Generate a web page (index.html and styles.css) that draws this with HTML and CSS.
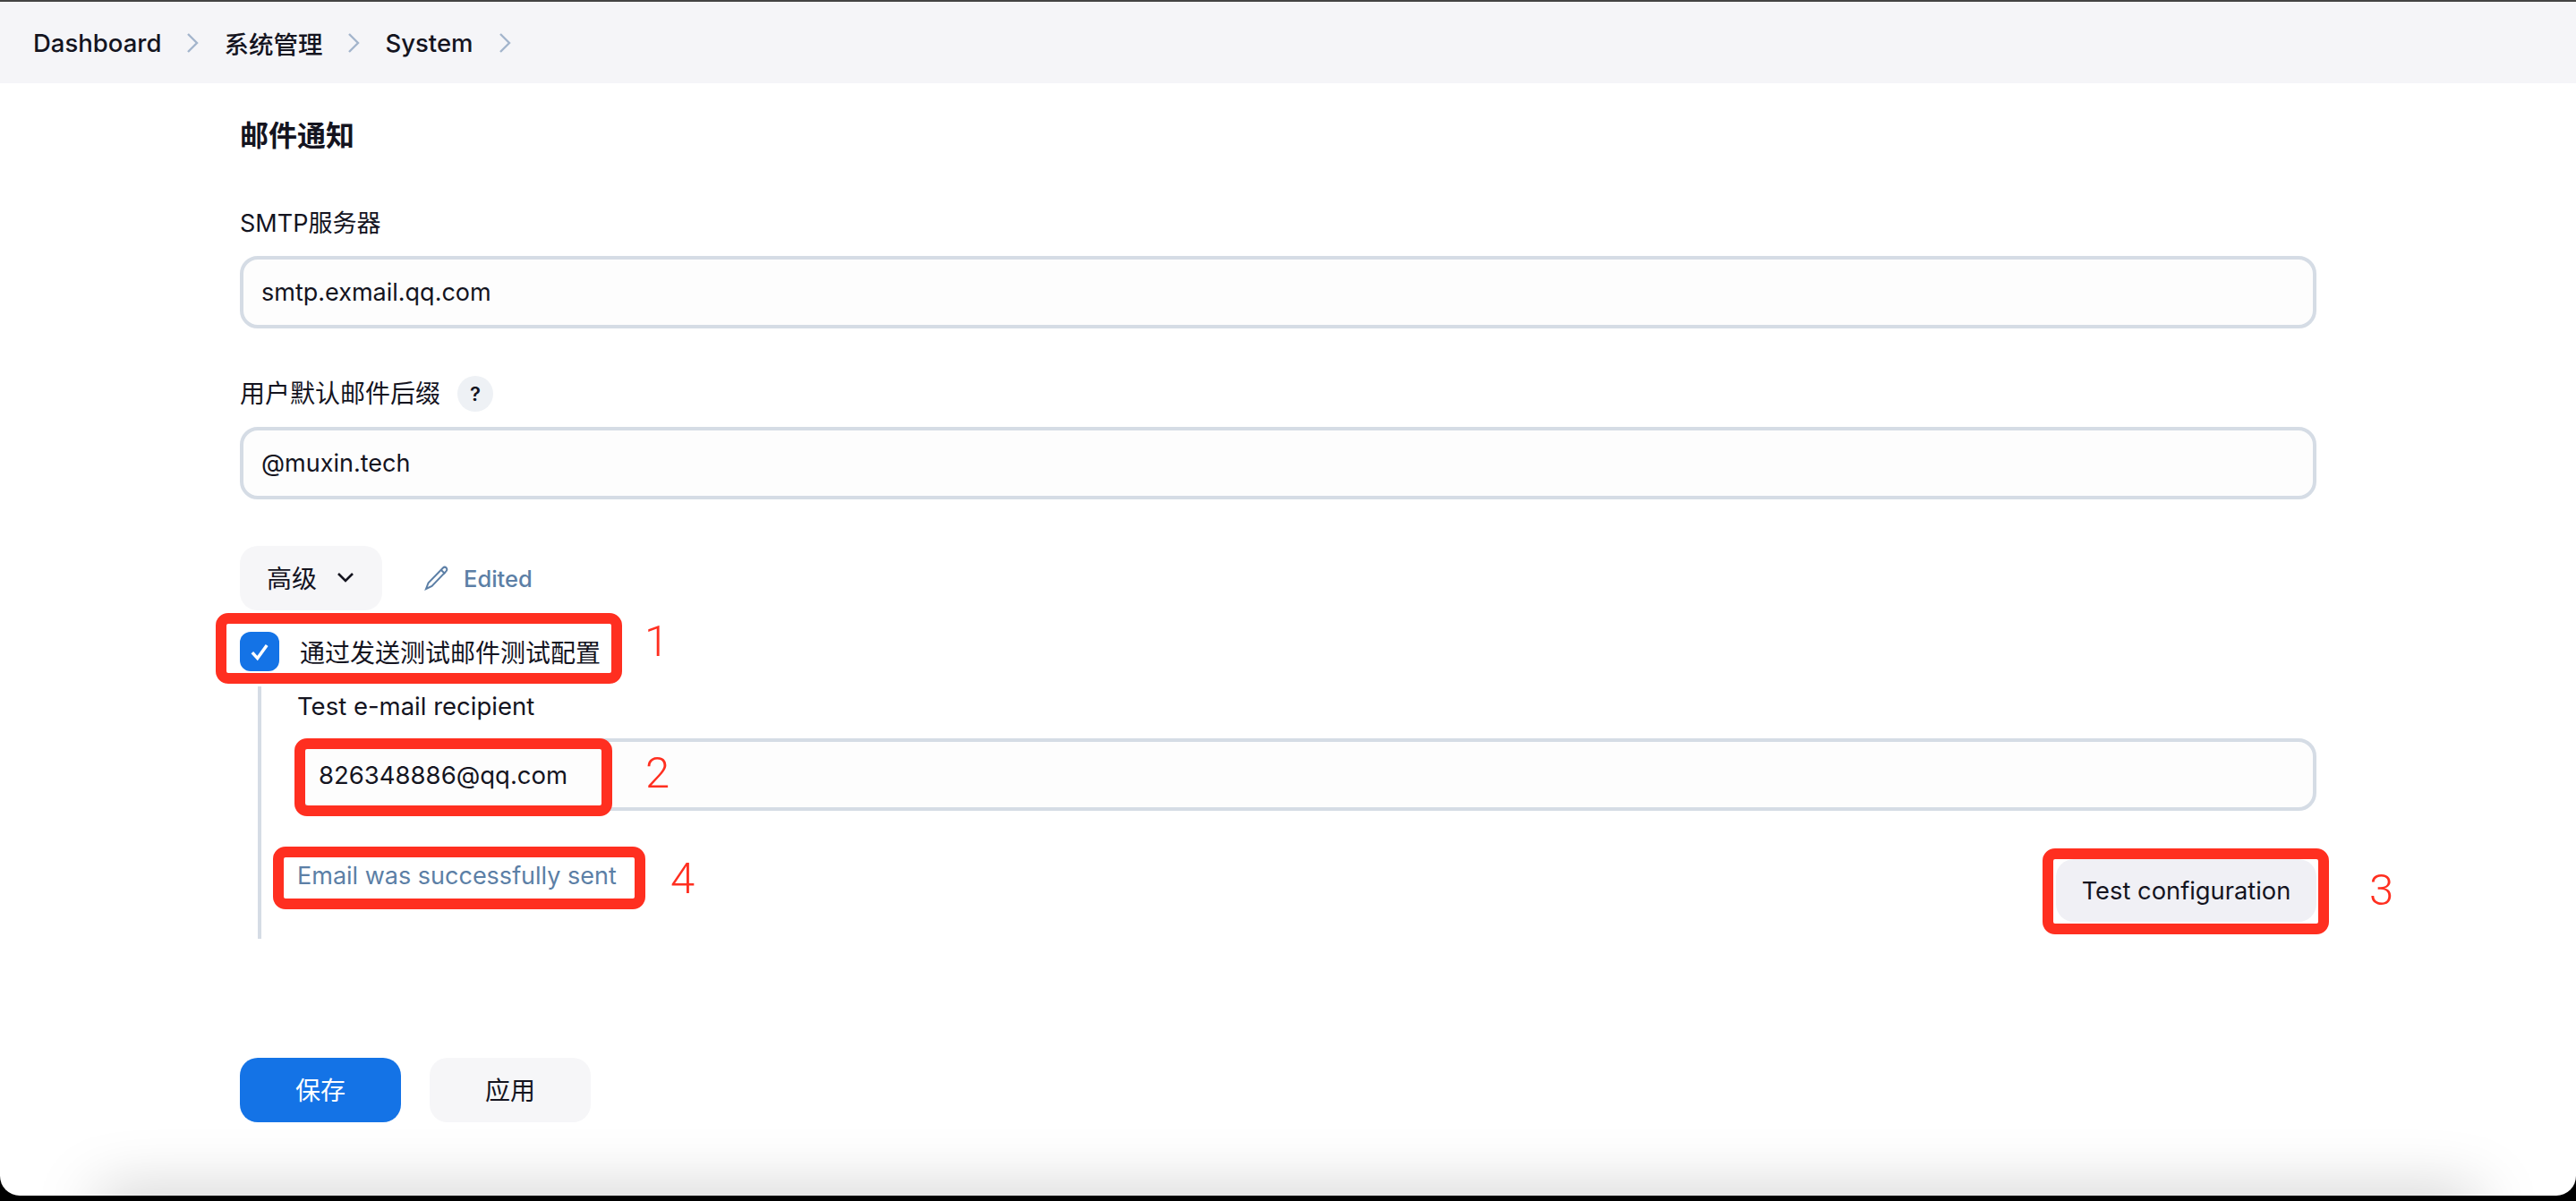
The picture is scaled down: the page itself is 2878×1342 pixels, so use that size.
FILE: index.html
```html
<!DOCTYPE html>
<html lang="en">
<head>
  <meta charset="UTF-8">
  <meta name="viewport" content="width=device-width, initial-scale=1.0">
  <title>System - 邮件通知</title>
  <link rel="stylesheet" href="styles.css">
</head>
<body>
  <div class="window">
    <nav class="crumbs">
      <a class="crumb">Dashboard</a>
      <svg class="crumb-arrow" viewBox="0 0 14 24"><path d="M2 2l10 10L2 22"/></svg>
      <a class="crumb">系统管理</a>
      <svg class="crumb-arrow" viewBox="0 0 14 24"><path d="M2 2l10 10L2 22"/></svg>
      <a class="crumb">System</a>
      <svg class="crumb-arrow" viewBox="0 0 14 24"><path d="M2 2l10 10L2 22"/></svg>
    </nav>

    <main class="form">
      <h2 class="section-title">邮件通知</h2>

      <label class="field-label first">SMTP服务器</label>
      <input class="text-input" type="text" value="smtp.exmail.qq.com">

      <div class="field-label with-help">
        <span>用户默认邮件后缀</span>
        <span class="help">?</span>
      </div>
      <input class="text-input help-input" type="text" value="@muxin.tech">

      <div class="advanced-row">
        <button class="btn advanced">高级
          <svg class="chevron" viewBox="0 0 20 12"><path d="M2 2l8 8 8-8"/></svg>
        </button>
        <span class="edited">
          <svg class="pencil" viewBox="0 0 28 28"><path d="M21 2.500c1-1 2.600-1 3.600 0s1 2.600 0 3.600L8.500 23 2 26l2.600-6.800z"/><path d="M19 5l4.200 4.200"/></svg>
          Edited
        </span>
      </div>

      <div class="check-row">
        <span class="checkbox">
          <svg viewBox="0 0 24 24"><path d="M5 13l5 5.500L19 6"/></svg>
        </span>
        <span>通过发送测试邮件测试配置</span>
      </div>

      <div class="nested">
        <label class="field-label nested-label">Test e-mail recipient</label>
        <input class="text-input recipient" type="text" value="826348886@qq.com">
        <div class="validate-row">
          <span class="message">Email was successfully sent</span>
          <button class="btn validate">Test configuration</button>
        </div>
      </div>

      <div class="actions">
        <button class="btn primary">保存</button>
        <button class="btn secondary">应用</button>
      </div>
    </main>

    <!-- annotations drawn over the screenshot -->
    <div class="mark mark-1"></div>
    <div class="mark mark-2"></div>
    <div class="mark mark-3"></div>
    <div class="mark mark-4"></div>
    <span class="num num-1">1</span>
    <span class="num num-2">2</span>
    <span class="num num-3">3</span>
    <span class="num num-4">4</span>

    <div class="bottom-shadow"></div>
  </div>
</body>
</html>
```

FILE: styles.css
```css
* {
  box-sizing: border-box;
}
body {
  margin: 0;
  background: #000;
  color: #14141f;
  font-family: Inter, "Noto Sans CJK SC", sans-serif;
  font-size: 28px;
}
.window {
  position: relative;
  height: 1336px;
  background: #fff;
  border-radius: 0 0 22px 22px;
  overflow: hidden;
}

.crumbs {
  display: flex;
  align-items: center;
  height: 93px;
  padding-left: 37px;
  background: #f5f5f8;
  border-top: 2px solid #444;
  font-size: 27.500px;
  font-weight: 500;
}
.crumb-arrow {
  width: 14px;
  height: 24px;
  margin: 0 28px;
  fill: none;
  stroke: #a3b5cc;
  stroke-width: 2.4;
}

.form {
  width: 2588px;
  padding-left: 268px;
}
.section-title {
  margin: 39px 0 0;
  font-size: 32px;
  line-height: 40px;
  font-weight: 600;
}
.field-label {
  display: block;
  line-height: 36px;
}
.field-label.first {
  margin: 60px 0 18px;
  font-size: 27px;
}
.with-help {
  display: flex;
  align-items: center;
  gap: 19px;
  margin-top: 53px;
}
.help {
  width: 40px;
  height: 40px;
  border-radius: 50%;
  background: #eef1f5;
  text-align: center;
  line-height: 40px;
  font-size: 22px;
  font-weight: 600;
}
.text-input {
  display: block;
  width: 100%;
  height: 81px;
  padding: 0 20px;
  border: 4px solid #d5dce5;
  border-radius: 20px;
  background: #fdfdfd;
  color: #14141f;
  font: inherit;
  font-size: 27px;
  outline: none;
}
.help-input {
  margin-top: 17px;
}
.recipient {
  font-size: 27.500px;
}

.btn {
  height: 72px;
  padding: 0 0 2px;
  border: none;
  border-radius: 20px;
  font: inherit;
  color: #14141f;
}
.advanced-row {
  display: flex;
  align-items: center;
  margin-top: 52px;
}
.advanced {
  display: flex;
  align-items: center;
  width: 159px;
  padding-left: 30px;
  background: #f6f6f8;
}
.chevron {
  width: 20px;
  height: 12px;
  margin-left: 22px;
  fill: none;
  stroke: #14141f;
  stroke-width: 2.6;
}
.edited {
  display: flex;
  align-items: center;
  gap: 16px;
  margin-left: 47px;
  color: #5c7fa6;
  font-size: 25.500px;
  font-weight: 500;
}
.pencil {
  width: 28px;
  height: 28px;
  fill: none;
  stroke: #5c7fa6;
  stroke-width: 2;
}

.check-row {
  display: flex;
  align-items: center;
  gap: 23px;
  height: 44px;
  margin-top: 24px;
}
.checkbox {
  display: flex;
  align-items: center;
  justify-content: center;
  width: 44px;
  height: 44px;
  border-radius: 12px;
  background: #1473e6;
}
.checkbox svg {
  width: 28px;
  height: 28px;
  fill: none;
  stroke: #fff;
  stroke-width: 3;
}

.nested {
  height: 282px;
  margin: 17px 0 0 20px;
  padding: 4px 0 0 40px;
  border-left: 4px solid #d5dce5;
}
.nested-label {
  margin-bottom: 18px;
  font-size: 27.500px;
}
.validate-row {
  display: flex;
  justify-content: space-between;
  align-items: flex-start;
  margin-top: 54px;
}
.message {
  padding-top: 1px;
  line-height: 36px;
  color: #5c7fa6;
  font-size: 27px;
}
.validate {
  width: 291px;
  height: 70px;
  padding: 0;
  background: #f0f0f5;
  font-size: 27.300px;
}

.actions {
  display: flex;
  gap: 32px;
  margin-top: 133px;
}
.primary,
.secondary {
  width: 180px;
}
.primary {
  background: #1473e6;
  color: #fff;
}
.secondary {
  background: #f6f6f8;
}

/* red annotations */
.mark {
  position: absolute;
  border: 12px solid #ff2f20;
  border-radius: 14px;
}
.mark-1 { left: 241px; top: 685px; width: 454px; height: 79px; }
.mark-2 { left: 329px; top: 825px; width: 355px; height: 87px; }
.mark-3 { left: 2282px; top: 948px; width: 320px; height: 96px; }
.mark-4 { left: 305px; top: 946px; width: 416px; height: 70px; }
.num {
  position: absolute;
  color: #ff2f20;
  font-family: Roboto, sans-serif;
  font-weight: 300;
  font-size: 49px;
  line-height: 56px;
}
.num-1 { left: 720px; top: 689px; }
.num-2 { left: 721px; top: 836px; }
.num-3 { left: 2647px; top: 967px; }
.num-4 { left: 749px; top: 954px; }

.bottom-shadow {
  position: absolute;
  left: 110px;
  right: 110px;
  bottom: -40px;
  height: 40px;
  box-shadow: 0 0 70px rgba(0, 0, 0, 0.26);
}
```
